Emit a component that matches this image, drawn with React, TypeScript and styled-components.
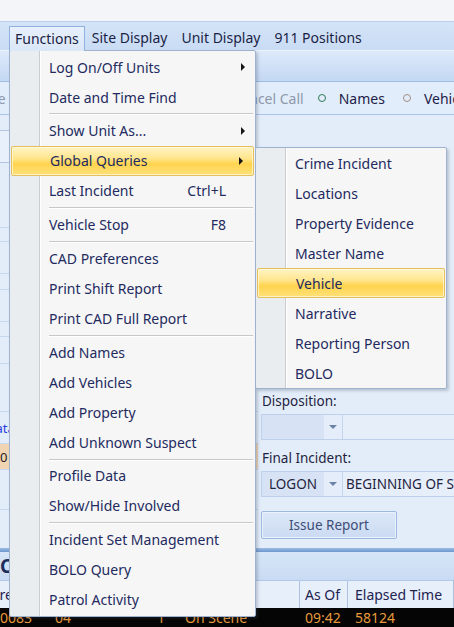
import React from 'react'
import styled, { createGlobalStyle, css } from 'styled-components'

const GlobalStyle = createGlobalStyle`
  html, body {
    margin: 0;
    padding: 0;
  }
  body {
    width: 454px;
    height: 627px;
    overflow: hidden;
    font-family: 'Noto Sans', 'Open Sans', sans-serif;
  }
`

const Window = styled.div`
  position: relative;
  width: 454px;
  height: 627px;
  overflow: hidden;
  display: flex;
  flex-direction: column;
  background: #e3edfa;
  font-size: 14px;
  color: #1e2350;
`

const TitleStrip = styled.div`
  height: 21px;
  flex: none;
  background: #f3f5f8;
  border-bottom: 1px solid #b9cfec;
`

const MenuBar = styled.div`
  height: 28px;
  flex: none;
  box-sizing: border-box;
  display: flex;
  align-items: stretch;
  padding: 4px 0 0 9px;
  background: linear-gradient(#d4e4f8, #c9dcf4);
`

const MenuTitle = styled.div<{ $open?: boolean }>`
  display: flex;
  align-items: center;
  padding: 0 7px 2px;
  color: #1b1f45;
  white-space: nowrap;
  box-sizing: border-box;
  ${(p) =>
    p.$open &&
    css`
      position: relative;
      z-index: 3;
      padding: 0 5px 2px;
      border: 1px solid #8fb1df;
      border-bottom: none;
      background: linear-gradient(#e8f0fc, #dae7f8);
      margin-bottom: -1px;
    `}
`

const Toolbar = styled.div`
  height: 32px;
  flex: none;
  box-sizing: border-box;
  border-top: 1px solid #edf3fc;
  border-bottom: 1px solid #9dbde6;
  background: linear-gradient(#dce9fa, #cfe0f6 55%, #c3d8f3);
`

const OptionRow = styled.div`
  height: 33px;
  flex: none;
  box-sizing: border-box;
  display: flex;
  align-items: center;
  background: #e2edfb;
  border-bottom: 1px solid #a9c5e9;
  white-space: nowrap;
`

const Action = styled.span<{ $lead?: number }>`
  color: #8d98aa;
  margin-left: ${(p) => p.$lead ?? 14}px;
  flex: none;
`

const Radio = styled.span<{ $tone: string; $lead?: number }>`
  display: inline-block;
  width: 6px;
  height: 6px;
  border-radius: 50%;
  border: 1.5px solid ${(p) => p.$tone};
  margin: 0 13px 0 ${(p) => p.$lead ?? 14}px;
  flex: none;
`

const OptionLabel = styled.span`
  color: #1e2148;
  flex: none;
`

const Body = styled.div`
  flex: 1;
  display: flex;
  min-height: 0;
`

const LeftPanel = styled.div`
  width: 258px;
  flex: none;
  display: flex;
  flex-direction: column;
  padding-top: 15px;
  box-sizing: border-box;
`

const InputBox = styled.div`
  height: 33px;
  margin-right: 8px;
  box-sizing: border-box;
  border: 1px solid #b3c5df;
  border-left: none;
  background: #e8f0fb;
`

const ListRow = styled.div<{ $h: number; $tint?: string }>`
  height: ${(p) => p.$h}px;
  box-sizing: border-box;
  border-bottom: 1px solid #c6d7ee;
  background: ${(p) => p.$tint ?? 'transparent'};
  display: flex;
  align-items: center;
  font-size: 13px;
  color: #222;
`

const LinkText = styled.span`
  color: #2b3fe0;
  margin-left: -14px;
`

const FormPanel = styled.div`
  flex: 1;
  display: flex;
  flex-direction: column;
  justify-content: flex-end;
  padding: 0 0 9px 3px;
  min-width: 0;
`

const FieldLabel = styled.div`
  font-size: 13.5px;
  color: #1f2340;
  padding-left: 1px;
  line-height: 16px;
  margin-bottom: 5px;
`

const Combo = styled.div`
  height: 26px;
  display: flex;
  box-sizing: border-box;
  border: 1px solid #bfd1ea;
  border-right: none;
  margin-bottom: 10px;
  white-space: nowrap;
`

const ComboValue = styled.div`
  width: 62px;
  flex: none;
  display: flex;
  align-items: center;
  padding-left: 7px;
  box-sizing: border-box;
  background: #d7e3f4;
  color: #1f2340;
  font-size: 13.5px;
`

const ComboButton = styled.div`
  width: 18px;
  flex: none;
  display: flex;
  align-items: center;
  justify-content: center;
  background: #e4edf9;
  border-right: 1px solid #c3d4ec;
  &::after {
    content: '';
    border-left: 4px solid transparent;
    border-right: 4px solid transparent;
    border-top: 4px solid #6d82a8;
  }
`

const ComboText = styled.div`
  flex: 1;
  display: flex;
  align-items: center;
  padding-left: 3px;
  background: #e6eefa;
  color: #1f2340;
  font-size: 13.5px;
  overflow: hidden;
`

const IssueButton = styled.button`
  width: 136px;
  height: 28px;
  margin-top: 4px;
  border: 1px solid #9db9df;
  border-radius: 2px;
  background: linear-gradient(#dce8f8, #cbdbf2);
  box-shadow: inset 0 0 0 1px #e9f1fc;
  color: #3e4e78;
  font-family: inherit;
  font-size: 13.5px;
  padding: 0;
`

const BottomPanel = styled.div`
  flex: none;
  display: flex;
  flex-direction: column;
`

const Band = styled.div`
  height: 4px;
  background: linear-gradient(#9bbbe5, #6f97cd);
`

const PanelTitle = styled.div`
  height: 28px;
  display: flex;
  align-items: center;
  background: linear-gradient(#d7e6f8, #c9dbf3);
  font-size: 19px;
  font-weight: 700;
  color: #1d2d5e;
`

const GridRow = styled.div<{ $head?: boolean }>`
  display: grid;
  grid-template-columns: 50px 100px 30px 120px 48px 1fr;
  white-space: nowrap;
  overflow: hidden;
  ${(p) =>
    p.$head
      ? css`
          height: 28px;
          background: #e7effb;
          color: #1e2350;
          border-top: 1px solid #b3c8e6;
          box-sizing: border-box;
        `
      : css`
          height: 19px;
          background: #050505;
          color: #e89a3a;
        `}
`

const Cell = styled.div<{ $head?: boolean; $pad?: number }>`
  display: flex;
  align-items: center;
  padding-left: ${(p) => p.$pad ?? 5}px;
  overflow: hidden;
  ${(p) =>
    p.$head &&
    css`
      border-right: 1px solid #aac0df;
    `}
`

const ShiftedText = styled.span<{ $shift: number }>`
  margin-left: ${(p) => p.$shift}px;
`

const DropMenu = styled.div<{ $left: number; $top: number; $width: number }>`
  position: absolute;
  z-index: 2;
  left: ${(p) => p.$left}px;
  top: ${(p) => p.$top}px;
  width: ${(p) => p.$width}px;
  box-sizing: border-box;
  border: 1px solid #9fb2cf;
  border-radius: 2px;
  padding: 1px 0;
  background: linear-gradient(
    to right,
    #e9edf0 0,
    #e9edf0 29px,
    #c9ccd0 29px,
    #c9ccd0 30px,
    #ffffff 30px,
    #ffffff 31px,
    #f6f6f6 31px
  );
  box-shadow: 2px 2px 3px rgba(60, 70, 90, 0.25);
  color: #232a60;
  white-space: nowrap;
`

const SubMenu = styled(DropMenu)`
  padding: 0;
`

const Item = styled.div<{ $hot?: boolean }>`
  height: 30px;
  box-sizing: border-box;
  display: flex;
  align-items: center;
  padding-left: 39px;
  ${(p) =>
    p.$hot &&
    css`
      margin: 0 1px;
      padding-left: 38px;
      border: 1px solid #e4bf5e;
      border-radius: 2px;
      background: linear-gradient(#fff4c4 0%, #ffe58e 40%, #ffd44e 60%, #ffe17a 100%);
      box-shadow: inset 0 0 0 1px rgba(255, 250, 225, 0.7);
    `}
`

const Shortcut = styled.span`
  margin-left: auto;
  margin-right: 29px;
`

const Arrow = styled.span`
  margin-left: auto;
  margin-right: 10px;
  width: 0;
  height: 0;
  border-top: 4px solid transparent;
  border-bottom: 4px solid transparent;
  border-left: 4px solid #151515;
`

const Separator = styled.div`
  height: 3.8px;
  margin-left: 39px;
  margin-right: 2px;
  display: flex;
  align-items: center;
  &::after {
    content: '';
    flex: 1;
    height: 1px;
    background: #c8c8c8;
    box-shadow: 0 1px 0 #ffffff;
  }
`

type Entry =
  | { kind: 'sep' }
  | { kind: 'item'; label: string; shortcut?: string; sub?: boolean; hot?: boolean }

const functions: Entry[] = [
  { kind: 'item', label: 'Log On/Off Units', sub: true },
  { kind: 'item', label: 'Date and Time Find' },
  { kind: 'sep' },
  { kind: 'item', label: 'Show Unit As...', sub: true },
  { kind: 'item', label: 'Global Queries', sub: true, hot: true },
  { kind: 'item', label: 'Last Incident', shortcut: 'Ctrl+L' },
  { kind: 'sep' },
  { kind: 'item', label: 'Vehicle Stop', shortcut: 'F8' },
  { kind: 'sep' },
  { kind: 'item', label: 'CAD Preferences' },
  { kind: 'item', label: 'Print Shift Report' },
  { kind: 'item', label: 'Print CAD Full Report' },
  { kind: 'sep' },
  { kind: 'item', label: 'Add Names' },
  { kind: 'item', label: 'Add Vehicles' },
  { kind: 'item', label: 'Add Property' },
  { kind: 'item', label: 'Add Unknown Suspect' },
  { kind: 'sep' },
  { kind: 'item', label: 'Profile Data' },
  { kind: 'item', label: 'Show/Hide Involved' },
  { kind: 'sep' },
  { kind: 'item', label: 'Incident Set Management' },
  { kind: 'item', label: 'BOLO Query' },
  { kind: 'item', label: 'Patrol Activity' },
]

const queries = [
  'Crime Incident',
  'Locations',
  'Property Evidence',
  'Master Name',
  'Vehicle',
  'Narrative',
  'Reporting Person',
  'BOLO',
]

const leftRows: { h: number; tint?: string; text?: React.ReactNode }[] = [
  { h: 65 },
  { h: 14 },
  { h: 32 },
  { h: 16 },
  { h: 32 },
  { h: 15 },
  { h: 27 },
  { h: 48 },
  { h: 32, text: <LinkText>Data</LinkText> },
  { h: 26, tint: '#f1d5b3', text: <span>0</span> },
  { h: 40 },
]

const App: React.FC = () => {
  return (
    <>
      <GlobalStyle />
      <Window>
        <TitleStrip />
        <MenuBar>
          <MenuTitle $open>Functions</MenuTitle>
          <MenuTitle>Site Display</MenuTitle>
          <MenuTitle>Unit Display</MenuTitle>
          <MenuTitle>911 Positions</MenuTitle>
        </MenuBar>
        <Toolbar />
        <OptionRow>
          <Action $lead={-30}>Close</Action>
          <Action $lead={227}>Cancel Call</Action>
          <Radio $tone="#2f7a55" />
          <OptionLabel>Names</OptionLabel>
          <Radio $tone="#a48e80" $lead={18} />
          <OptionLabel>Vehicles</OptionLabel>
        </OptionRow>
        <Body>
          <LeftPanel>
            <InputBox />
            {leftRows.map((r, i) => (
              <ListRow key={i} $h={r.h} $tint={r.tint}>
                {r.text}
              </ListRow>
            ))}
          </LeftPanel>
          <FormPanel>
            <FieldLabel>Disposition:</FieldLabel>
            <Combo>
              <ComboValue />
              <ComboButton />
              <ComboText />
            </Combo>
            <FieldLabel>Final Incident:</FieldLabel>
            <Combo>
              <ComboValue>LOGON</ComboValue>
              <ComboButton />
              <ComboText>BEGINNING OF SHIFT</ComboText>
            </Combo>
            <IssueButton>Issue Report</IssueButton>
          </FormPanel>
        </Body>
        <BottomPanel>
          <Band />
          <PanelTitle>Calls</PanelTitle>
          <GridRow $head>
            <Cell $head $pad={0}>
              <ShiftedText $shift={-30}>Where</ShiftedText>
            </Cell>
            <Cell $head>Unit</Cell>
            <Cell $head>#</Cell>
            <Cell $head>Status</Cell>
            <Cell $head>As Of</Cell>
            <Cell $head $pad={7}>Elapsed Time</Cell>
          </GridRow>
          <GridRow>
            <Cell $pad={0}>0083</Cell>
            <Cell>04</Cell>
            <Cell $pad={7}>1</Cell>
            <Cell>On Scene</Cell>
            <Cell>09:42</Cell>
            <Cell $pad={7}>58124</Cell>
          </GridRow>
        </BottomPanel>

        <DropMenu $left={9} $top={50} $width={247}>
          {functions.map((e, i) =>
            e.kind === 'sep' ? (
              <Separator key={i} />
            ) : (
              <Item key={i} $hot={e.hot}>
                {e.label}
                {e.shortcut && <Shortcut>{e.shortcut}</Shortcut>}
                {e.sub && <Arrow />}
              </Item>
            )
          )}
        </DropMenu>

        <SubMenu $left={255} $top={147} $width={192}>
          {queries.map((q) => (
            <Item key={q} $hot={q === 'Vehicle'}>
              {q}
            </Item>
          ))}
        </SubMenu>
      </Window>
    </>
  )
}

export default App
